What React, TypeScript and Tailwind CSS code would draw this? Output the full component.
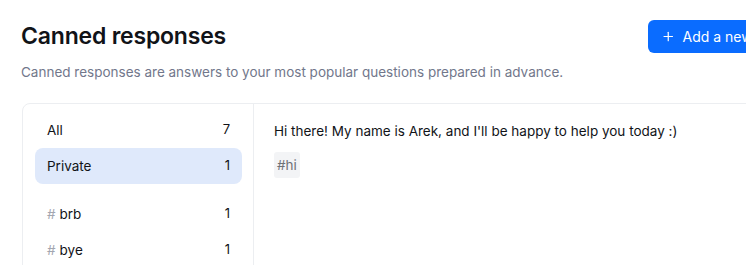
import { Plus } from 'lucide-react';

const folders = [
  { name: 'All', count: 7 },
  { name: 'Private', count: 1, active: true },
];

const tags = [
  { name: 'brb', count: 1 },
  { name: 'bye', count: 1 },
  { name: 'hi', count: 1 },
];

export default function App() {
  return (
    <div className="h-screen w-full overflow-hidden bg-white font-['Inter',sans-serif] text-[#111318]">
      <div className="w-[818px] pl-[21px]">
        <div className="flex items-center justify-between pt-[20px]">
          <h1 className="text-[23px] font-semibold leading-[33px] tracking-[-0.2px]">Canned responses</h1>
          <button className="flex h-[33px] w-[170px] shrink-0 items-center gap-[7px] whitespace-nowrap rounded-[6px] bg-[#0a6cff] pl-[13px] text-[14px] text-white">
            <Plus size={19} strokeWidth={2} />
            Add a new response
          </button>
        </div>
        <p className="mt-[10px] text-[13.5px] leading-[18px] text-[#72778b]">
          Canned responses are answers to your most popular questions prepared in advance.
        </p>

        <div className="mt-[22px] ml-px flex h-[300px] w-[900px] rounded-[8px] border border-[#eceef1]">
          <div className="w-[231px] shrink-0 border-r border-[#eceef1] pt-[8px] pl-[12px] pr-[11px]">
            {folders.map((f) => (
              <div
                key={f.name}
                className={
                  'flex h-[36px] items-center justify-between rounded-[8px] px-[12px] text-[13.5px] ' +
                  (f.active ? 'bg-[#dfe9fb]' : '')
                }
              >
                <span>{f.name}</span>
                <span className="text-[13px]">{f.count}</span>
              </div>
            ))}
            <div className="mt-[12px]">
              {tags.map((t) => (
                <div key={t.name} className="flex h-[36px] items-center justify-between px-[12px] text-[13.5px]">
                  <span>
                    <span className="mr-[4px] text-[#a3a6b0]">#</span>
                    {t.name}
                  </span>
                  <span className="text-[13px]">{t.count}</span>
                </div>
              ))}
            </div>
          </div>
          <div className="flex-1 pt-[17px] pl-[20px]">
            <p className="text-[13.5px] leading-[20px]">Hi there! My name is Arek, and I'll be happy to help you today :)</p>
            <span className="mt-[11px] inline-flex h-[26px] items-center rounded-[3px] bg-[#f3f4f6] px-[3px] text-[13.5px] text-[#6f7177]">
              #hi
            </span>
          </div>
        </div>
      </div>
    </div>
  );
}
